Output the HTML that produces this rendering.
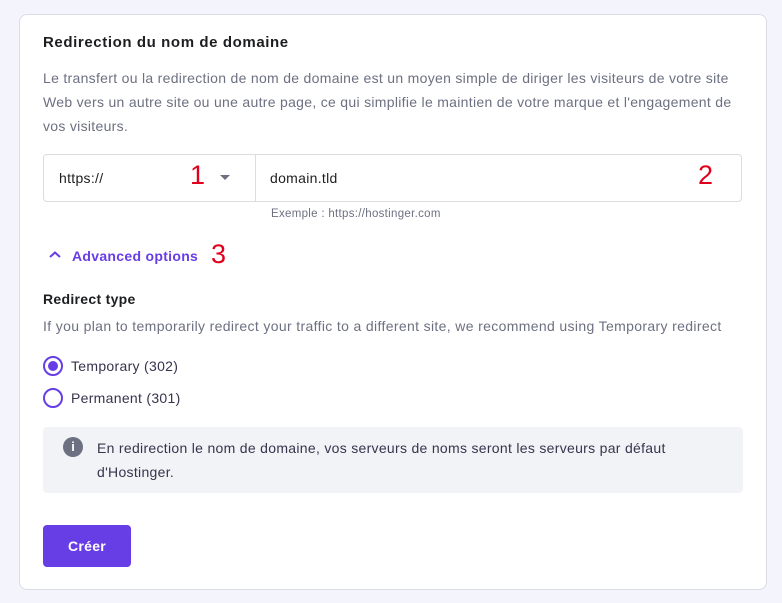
<!DOCTYPE html>
<html><head><style>
*{box-sizing:border-box;margin:0;padding:0}
body{width:782px;height:603px;background:#f4f4fc;font-family:"Liberation Sans",sans-serif;position:relative;overflow:hidden;color:#2f1c6a;letter-spacing:0.3px}
.card{position:absolute;left:19px;top:14px;width:748px;height:576px;background:#fff;border:1px solid #dcdce6;border-radius:8px}
.a{position:absolute;white-space:nowrap}
.t{left:43px;top:34px;font-size:15px;font-weight:bold;color:#1d1e20;letter-spacing:0.6px}
.p{left:43px;font-size:14px;color:#6d7081}
.in{position:absolute;left:43px;top:154px;width:699px;height:48px;border:1px solid #dadce0;border-radius:4px}
.red{color:#e0001b;font-size:27px;position:absolute;letter-spacing:0}
.rad{position:absolute;left:43px;width:20px;height:20px;border:2px solid #673de6;border-radius:50%}
.box{position:absolute;left:43px;top:427px;width:700px;height:66px;background:#f2f3f6;border-radius:4px}
.btn{position:absolute;left:43px;top:525px;width:88px;height:42px;background:#673de6;border-radius:4px;color:#fff;font-weight:bold;font-size:14px;text-align:center;line-height:42px}
</style></head><body>
<div class="card"></div>
<div class="a t">Redirection du nom de domaine</div>
<div class="a p" style="top:70px">Le transfert ou la redirection de nom de domaine est un moyen simple de diriger les visiteurs de votre site</div>
<div class="a p" style="top:94px">Web vers un autre site ou une autre page, ce qui simplifie le maintien de votre marque et l'engagement de</div>
<div class="a p" style="top:118px">vos visiteurs.</div>
<div class="in"><div style="position:absolute;left:211px;top:0;width:1px;height:46px;background:#dadce0"></div></div>
<div class="a" style="left:59px;top:170px;font-size:14px;color:#1d1e20">https://</div>
<div class="red" style="left:190px;top:160px">1</div>
<div class="a" style="left:220px;top:175px;width:0;height:0;border-left:5px solid transparent;border-right:5px solid transparent;border-top:5px solid #6d7081"></div>
<div class="a" style="left:270px;top:170px;font-size:14px;color:#1d1e20">domain.tld</div>
<div class="red" style="left:698px;top:160px">2</div>
<div class="a" style="left:271px;top:208px;font-size:11.5px;color:#6d7081">Exemple : https://hostinger.com</div>
<svg class="a" style="left:48px;top:250px" width="14" height="10"><path d="M2 7L7 2.5L12 7" stroke="#673de6" stroke-width="2" fill="none"/></svg>
<div class="a" style="left:72px;top:248px;font-size:14px;font-weight:bold;color:#673de6">Advanced options</div>
<div class="red" style="left:211px;top:239px">3</div>
<div class="a" style="left:43px;top:291px;font-size:14px;font-weight:bold;color:#1d1e20">Redirect type</div>
<div class="a p" style="top:318px;letter-spacing:0.35px">If you plan to temporarily redirect your traffic to a different site, we recommend using Temporary redirect</div>
<div class="rad" style="top:356px"><div style="position:absolute;left:3px;top:3px;width:10px;height:10px;border-radius:50%;background:#673de6"></div></div>
<div class="a" style="left:71px;top:358px;font-size:14px;color:#36344d">Temporary (302)</div>
<div class="rad" style="top:388px"></div>
<div class="a" style="left:71px;top:390px;font-size:14px;color:#36344d">Permanent (301)</div>
<div class="box"></div>
<div class="a" style="left:63px;top:437px;width:20px;height:20px;border-radius:50%;background:#6d7081;color:#fff;font-size:13px;font-weight:bold;text-align:center;line-height:20px;letter-spacing:0">i</div>
<div class="a" style="left:97px;top:440px;font-size:14px;color:#36344d">En redirection le nom de domaine, vos serveurs de noms seront les serveurs par défaut</div>
<div class="a" style="left:97px;top:464px;font-size:14px;color:#36344d">d'Hostinger.</div>
<div class="btn">Créer</div>
</body></html>
